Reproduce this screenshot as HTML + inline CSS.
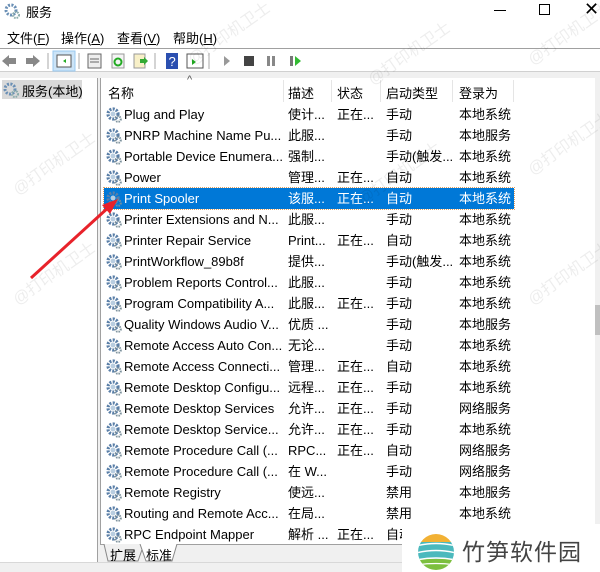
<!DOCTYPE html>
<html><head><meta charset="utf-8"><style>
*{margin:0;padding:0;box-sizing:border-box}
body{width:600px;height:572px;overflow:hidden;background:#f0f0f0;font-family:"Liberation Sans","Noto Sans CJK SC",sans-serif;font-size:13px;color:#000;position:relative}
.abs{position:absolute}
.row{position:absolute;left:104px;height:21px;width:420px;line-height:21px;white-space:nowrap}
.row span{position:absolute;top:0}
.sel{background:#0078d7;color:#fff;width:410px;outline:1px dotted #e0a060}
.gear{position:absolute;left:2px;top:3px;width:16px;height:16px}
.wm{position:absolute;color:rgba(0,0,0,0.07);font-size:16px;transform:rotate(-35deg);white-space:nowrap}
</style></head><body>
<!-- title -->
<div class="abs" style="left:0;top:0;width:600px;height:24px;background:#fff"></div>
<svg class="abs" style="left:4px;top:3px" width="16" height="16" viewBox="0 0 16 16"><circle cx="7" cy="7" r="5" fill="none" stroke="#6a8fb5" stroke-width="3" stroke-dasharray="2 1.4"/><circle cx="7" cy="7" r="2" fill="#fff"/><circle cx="12" cy="12" r="3" fill="none" stroke="#8aa" stroke-width="2" stroke-dasharray="1.5 1"/></svg>
<div class="abs" style="left:26px;top:2px;font-size:13px">服务</div>
<div class="abs" style="left:494px;top:10px;width:12px;height:1px;background:#000"></div>
<div class="abs" style="left:539px;top:4px;width:11px;height:11px;border:1px solid #000"></div>
<div class="abs" style="left:584px;top:0px;font-size:18px;line-height:18px;font-weight:300">✕</div>
<!-- menu -->
<div class="abs" style="left:0;top:24px;width:600px;height:24px;background:#fff"></div>
<div class="abs" style="left:7px;top:28px">文件(<u>F</u>)</div>
<div class="abs" style="left:61px;top:28px">操作(<u>A</u>)</div>
<div class="abs" style="left:117px;top:28px">查看(<u>V</u>)</div>
<div class="abs" style="left:173px;top:28px">帮助(<u>H</u>)</div>
<div class="abs" style="left:0;top:48px;width:600px;height:1px;background:#a0a0a0"></div>
<!-- toolbar -->
<div class="abs" style="left:0;top:49px;width:600px;height:22px;background:#fff"></div>
<div class="abs" style="left:0;top:71px;width:600px;height:1px;background:#d0d0d0"></div>
<svg class="abs" style="left:0;top:50px" width="320" height="22">
<path d="M2 11 L9 5 V8 H16 V14 H9 V17 Z" fill="#888"/>
<path d="M40 11 L33 5 V8 H26 V14 H33 V17 Z" fill="#888"/>
<line x1="48" y1="3" x2="48" y2="19" stroke="#aaa"/>
<rect x="53" y="1" width="22" height="20" fill="#cce4f7" stroke="#99c9ef"/>
<rect x="57" y="5" width="14" height="12" fill="#fff" stroke="#555"/><path d="M66 9 L63 11 L66 13Z" fill="#2a2"/>
<line x1="79" y1="3" x2="79" y2="19" stroke="#aaa"/>
<rect x="88" y="4" width="13" height="14" fill="#eee" stroke="#666"/><line x1="90" y1="9" x2="99" y2="9" stroke="#666"/><line x1="90" y1="12" x2="99" y2="12" stroke="#666"/>
<rect x="112" y="4" width="12" height="14" fill="#f4f4f4" stroke="#999"/><circle cx="118" cy="12" r="3.5" fill="none" stroke="#2a2" stroke-width="2"/>
<rect x="134" y="4" width="11" height="14" fill="#f8f0c8" stroke="#999"/><path d="M140 9h4v-2l4 4-4 4v-2h-4z" fill="#3a3"/>
<line x1="155" y1="3" x2="155" y2="19" stroke="#aaa"/>
<rect x="166" y="3" width="12" height="16" fill="#2b4fb0"/><text x="168.5" y="16" fill="#fff" font-size="13" font-family="Liberation Sans">?</text>
<rect x="187" y="4" width="16" height="14" fill="#fff" stroke="#555"/><path d="M192 9l4 3-4 3z" fill="#2a2"/>
<line x1="209" y1="3" x2="209" y2="19" stroke="#aaa"/>
<path d="M224 6l6 5-6 5z" fill="#999"/>
<rect x="244" y="6" width="10" height="10" fill="#444"/>
<rect x="267" y="6" width="3" height="10" fill="#888"/><rect x="272" y="6" width="3" height="10" fill="#888"/>
<rect x="290" y="6" width="3" height="10" fill="#777"/><path d="M295 6l6 5-6 5z" fill="#3b3"/>
</svg>
<!-- left pane -->
<div class="abs" style="left:0;top:78px;width:98px;height:484px;background:#fff;border-right:1px solid #a0a0a0"></div>
<div class="abs" style="left:2px;top:80px;width:80px;height:19px;background:#d9d9d9"></div>
<svg class="abs" style="left:3px;top:82px" width="16" height="16" viewBox="0 0 16 16"><circle cx="7" cy="7" r="5" fill="none" stroke="#6a8fb5" stroke-width="3" stroke-dasharray="2 1.4"/><circle cx="12" cy="12" r="3" fill="none" stroke="#8aa" stroke-width="2" stroke-dasharray="1.5 1"/></svg>
<div class="abs" style="left:22px;top:81px">服务(本地)</div>
<!-- list pane -->
<div class="abs" style="left:100px;top:78px;width:500px;height:466px;background:#fff;border-left:1px solid #a0a0a0"></div>
<div class="abs" style="left:283px;top:80px;width:1px;height:22px;background:#e5e5e5"></div>
<div class="abs" style="left:331px;top:80px;width:1px;height:22px;background:#e5e5e5"></div>
<div class="abs" style="left:380px;top:80px;width:1px;height:22px;background:#e5e5e5"></div>
<div class="abs" style="left:452px;top:80px;width:1px;height:22px;background:#e5e5e5"></div>
<div class="abs" style="left:513px;top:80px;width:1px;height:22px;background:#e5e5e5"></div>
<div class="abs" style="left:187px;top:74px;font-size:11px;color:#555">^</div>
<div class="abs" style="left:108px;top:83px">名称</div>
<div class="abs" style="left:288px;top:83px">描述</div>
<div class="abs" style="left:337px;top:83px">状态</div>
<div class="abs" style="left:386px;top:83px">启动类型</div>
<div class="abs" style="left:459px;top:83px">登录为</div>
<div class="abs" style="left:595px;top:78px;width:5px;height:466px;background:#f0f0f0"></div>
<div class="abs" style="left:595px;top:305px;width:5px;height:30px;background:#c0c0c0"></div>
<svg width="0" height="0" style="position:absolute"><defs><g id="g"><circle cx="7" cy="7" r="5" fill="none" stroke="#5a7fa8" stroke-width="3.2" stroke-dasharray="2 1.3"/><circle cx="7" cy="7" r="2.5" fill="#b8cde0"/><circle cx="12" cy="12" r="2.8" fill="none" stroke="#7a8f9a" stroke-width="2" stroke-dasharray="1.4 1"/></g></defs></svg>
<div id="rows"></div>
<script>
var d=[["Plug and Play","使计...","正在...","手动","本地系统"],
["PNRP Machine Name Pu...","此服...","","手动","本地服务"],
["Portable Device Enumera...","强制...","","手动(触发...","本地系统"],
["Power","管理...","正在...","自动","本地系统"],
["Print Spooler","该服...","正在...","自动","本地系统"],
["Printer Extensions and N...","此服...","","手动","本地系统"],
["Printer Repair Service","Print...","正在...","自动","本地系统"],
["PrintWorkflow_89b8f","提供...","","手动(触发...","本地系统"],
["Problem Reports Control...","此服...","","手动","本地系统"],
["Program Compatibility A...","此服...","正在...","手动","本地系统"],
["Quality Windows Audio V...","优质 ...","","手动","本地服务"],
["Remote Access Auto Con...","无论...","","手动","本地系统"],
["Remote Access Connecti...","管理...","正在...","自动","本地系统"],
["Remote Desktop Configu...","远程...","正在...","手动","本地系统"],
["Remote Desktop Services","允许...","正在...","手动","网络服务"],
["Remote Desktop Service...","允许...","正在...","手动","本地系统"],
["Remote Procedure Call (...","RPC...","正在...","自动","网络服务"],
["Remote Procedure Call (...","在 W...","","手动","网络服务"],
["Remote Registry","使远...","","禁用","本地服务"],
["Routing and Remote Acc...","在局...","","禁用","本地系统"],
["RPC Endpoint Mapper","解析 ...","正在...","自动","本地系统"]];
var h="";d.forEach(function(r,i){h+='<div class="row'+(i==4?' sel':'')+'" style="top:'+(104+21*i)+'px"><svg class="gear" viewBox="0 0 16 16"><use href="#g"/></svg><span style="left:20px">'+r[0]+'</span><span style="left:184px">'+r[1]+'</span><span style="left:233px">'+r[2]+'</span><span style="left:282px">'+r[3]+'</span><span style="left:355px">'+r[4]+'</span></div>';});
document.getElementById("rows").innerHTML=h;
</script>
<!-- tabs -->
<div class="abs" style="left:100px;top:544px;width:500px;height:1px;background:#a0a0a0"></div>
<svg class="abs" style="left:100px;top:544px" width="90" height="20"><path d="M4 0 L8 17 H38 L44 0" fill="#f0f0f0" stroke="#888"/><path d="M40 0 L46 17 H72 L77 0" fill="#fff" stroke="#888"/></svg>
<div class="abs" style="left:110px;top:545px;font-size:13px">扩展</div>
<div class="abs" style="left:146px;top:545px;font-size:13px">标准</div>
<div class="abs" style="left:0;top:562px;width:600px;height:1px;background:#d8d8d8"></div>
<!-- arrow -->
<svg class="abs" style="left:0;top:0" width="600" height="572"><line x1="31" y1="278" x2="110" y2="206" stroke="#e8222a" stroke-width="3"/><path d="M118 199 L102 205 L110 214 Z" fill="#e8222a"/></svg>
<!-- watermarks -->
<div class="wm" style="left:5px;top:150px">@打印机卫士</div>
<div class="wm" style="left:5px;top:260px">@打印机卫士</div>
<div class="wm" style="left:180px;top:20px">@打印机卫士</div>
<div class="wm" style="left:360px;top:40px">@打印机卫士</div>
<div class="wm" style="left:520px;top:20px">@打印机卫士</div>
<div class="wm" style="left:350px;top:160px">@打印机卫士</div>
<div class="wm" style="left:520px;top:130px">@打印机卫士</div>
<div class="wm" style="left:520px;top:260px">@打印机卫士</div>
<!-- logo -->
<div class="abs" style="left:402px;top:524px;width:198px;height:48px;background:#fff"></div>
<svg class="abs" style="left:416px;top:533px" width="40" height="38" viewBox="0 0 40 38"><defs><clipPath id="c"><circle cx="20" cy="19" r="18"/></clipPath></defs><g clip-path="url(#c)"><rect x="0" y="0" width="40" height="9" fill="#f2b134"/><rect x="0" y="9" width="40" height="17" fill="#4bb9bd"/><path d="M0 13 Q20 8 40 13" stroke="#fff" stroke-width="1.5" fill="none"/><path d="M0 20 Q20 15 40 20" stroke="#fff" stroke-width="1.5" fill="none"/><rect x="0" y="26" width="40" height="12" fill="#7cbf3f"/><path d="M0 27 Q20 23 40 27" stroke="#fff" stroke-width="1.5" fill="none"/><path d="M0 32 Q20 29 40 32" stroke="#fff" stroke-width="1.2" fill="none"/></g></svg>
<div class="abs" style="left:462px;top:533px;font-size:23px;color:#444;letter-spacing:1px">竹笋软件园</div>
</body></html>
